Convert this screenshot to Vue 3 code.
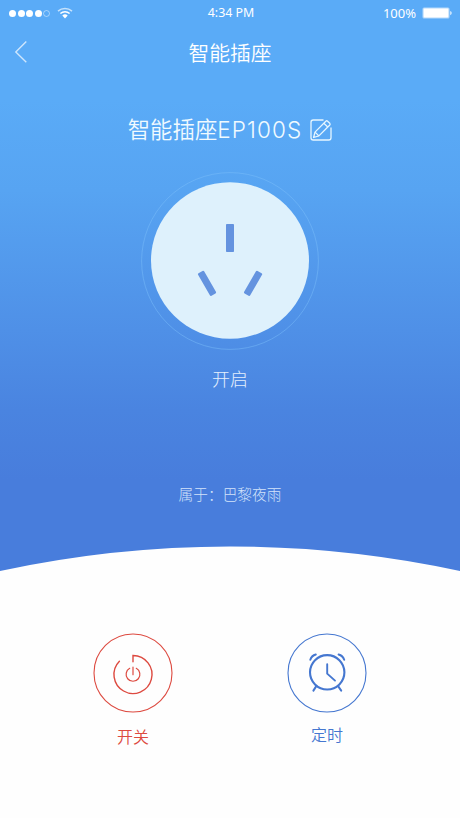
<template>
    <div class="page">
        <section class="hero">
            <header class="status-bar">
                <div class="signal">
                    <i v-for="n in 5" :key="n" class="dot" :class="{ empty: n > signalLevel }"></i>
                    <svg class="wifi" width="16" height="12" viewBox="0 0 16 12">
                        <path d="M1 4.1A10.6 10.6 0 0 1 15 4.1" opacity="0.65" />
                        <path d="M3.4 6.5A7 7 0 0 1 12.6 6.5" />
                        <path class="wifi-core" d="M5.3 8.6A4 4 0 0 1 10.7 8.6L8 11.4Z" />
                    </svg>
                </div>
                <span class="time">4:34 PM</span>
                <div class="battery">
                    <span>100%</span>
                    <svg width="31" height="12" viewBox="0 0 31 12">
                        <rect x="0.5" y="0.5" width="27" height="11" rx="1.5" fill="#fff" fill-opacity="0.55" />
                        <rect x="1.6" y="1.6" width="24.8" height="8.8" rx="0.8" fill="#fff" />
                        <path d="M28.2 4a2.2 2.2 0 0 1 0 4.2z" fill="#fff" fill-opacity="0.8" />
                    </svg>
                </div>
            </header>

            <nav class="nav-bar">
                <svg class="back" width="14" height="24" viewBox="0 0 14 24">
                    <path d="M12.3 1.5L1.8 12L12.3 22.3" />
                </svg>
                <h1>智能插座</h1>
            </nav>

            <div class="device-name">
                <span>智能插座</span><span class="model">EP100S</span>
                <svg class="edit" width="22" height="22" viewBox="0 0 22 22">
                    <path d="M13.5 1H3.2Q1 1 1 3.2V18.8Q1 21 3.2 21H18.8Q21 21 21 18.8V8.5" />
                    <path d="M3.6 18.5L5 13.1L15.8 2.2Q16.7 1.4 17.6 2.2L19.8 4.3Q20.5 5.2 19.8 6L8.9 16.9Z" />
                    <path d="M5 13.1L8.9 16.9M13.8 4.2L17.8 8" />
                </svg>
            </div>

            <svg class="socket" width="180" height="180" viewBox="0 0 180 180">
                <circle class="ring" cx="90" cy="90" r="88.4" />
                <ellipse class="plate" cx="90" cy="89.5" rx="79" ry="78.2" />
                <g class="holes">
                    <rect x="86" y="53" width="8" height="28" rx="0.8" />
                    <rect x="63.5" y="99.3" width="7" height="26" rx="1.2" transform="rotate(-30 67 112.3)" />
                    <rect x="109.6" y="99.3" width="7" height="26" rx="1.2" transform="rotate(30 113.1 112.3)" />
                </g>
            </svg>

            <p class="state">开启</p>
            <p class="owner">属于：巴黎夜雨</p>

            <svg class="arc" width="460" height="26" viewBox="0 0 460 26">
                <path d="M0 25A1092 1092 0 0 1 460 25V26H0Z" />
            </svg>
        </section>

        <section class="actions">
            <button class="action power">
                <svg width="80" height="80" viewBox="0 0 80 80">
                    <circle cx="40" cy="40" r="39" stroke-width="1.1" />
                    <path d="M40 28.8V22.5A19 19 0 1 1 26.4 28.2" stroke-width="1.4" />
                    <path d="M36.7 35.3A6.9 6.9 0 1 0 43.3 35.3M40 34V41.7" stroke-width="1.2" />
                </svg>
                <span>开关</span>
            </button>
            <button class="action timer">
                <svg width="80" height="80" viewBox="0 0 80 80">
                    <circle cx="40" cy="40" r="39" stroke-width="1.1" />
                    <circle cx="40.2" cy="39.3" r="17.2" stroke-width="2.1" />
                    <path d="M40.2 31.3V40.6L48 47.6" stroke-width="1.9" />
                    <path d="M23.3 26.8Q24.6 22.6 28.8 21.5M51.6 21.5Q55.8 22.6 57.2 26.8" stroke-width="2" />
                    <path d="M29.3 53.1L26.4 57.6M51.1 53.1L54.2 57.6" stroke-width="2" />
                </svg>
                <span>定时</span>
            </button>
        </section>
    </div>
</template>

<script setup>
import { ref } from "vue";

const signalLevel = ref(4);
</script>

<style>
body {
    margin: 0;
    background: #fefefe;
}
</style>

<style scoped>
.page {
    width: 460px;
    height: 818px;
    overflow: hidden;
    background: #fefefe;
    font-family: "Noto Sans CJK SC", sans-serif;
    font-weight: 300;
}

svg {
    display: block;
    fill: none;
}

.hero {
    height: 572px;
    display: flex;
    flex-direction: column;
    align-items: center;
    color: #fff;
    background: linear-gradient(#5aabf7 0, #5aabf7 100px, #57a4f2 190px, #4f90e7 330px, #4a84e0 410px, #487ddc 480px, #487ddc 100%);
}

.status-bar {
    width: 100%;
    height: 26px;
    box-sizing: border-box;
    padding: 0 7px 0 9px;
    display: grid;
    grid-template-columns: 1fr auto 1fr;
    align-items: center;
    font-family: "Noto Sans", sans-serif;
    font-weight: 400;
    font-size: 12px;
    line-height: 26px;
}

.signal {
    display: flex;
    align-items: center;
    gap: 1.6px;
}

.dot {
    width: 7px;
    height: 7px;
    border-radius: 50%;
    background: #fff;
}

.dot.empty {
    box-sizing: border-box;
    border: 1px solid rgba(255, 255, 255, 0.45);
    background: none;
}

.wifi {
    margin-left: 5px;
    stroke: #fff;
    stroke-width: 1.5;
}

.wifi .wifi-core {
    fill: #fff;
    stroke: none;
}

.time {
    font-size: 12.4px;
}

.battery {
    display: flex;
    align-items: center;
    justify-content: flex-end;
    gap: 6px;
    font-size: 13px;
}

.nav-bar {
    width: 100%;
    height: 52px;
    box-sizing: border-box;
    padding: 0 14px;
    display: grid;
    grid-template-columns: 1fr auto 1fr;
    align-items: center;
}

.back {
    stroke: rgba(255, 255, 255, 0.7);
    stroke-width: 1.4;
}

h1 {
    margin: 0;
    font-size: 20.8px;
    font-weight: 350;
    line-height: 50px;
}

.device-name {
    height: 32px;
    margin-top: 36px;
    display: flex;
    align-items: center;
    font-size: 22.4px;
    line-height: 30px;
    color: #f0faff;
}

.device-name span:first-child {
    margin-top: -4px;
    font-weight: 350;
}

.model {
    font-family: Inter, sans-serif;
    font-size: 22.5px;
    letter-spacing: 1.1px;
}

.edit {
    margin-left: 8px;
    stroke: #e6f6ff;
    stroke-width: 1.3;
    stroke-linejoin: round;
}

.socket {
    margin-top: 25px;
}

.ring {
    stroke: #7fc0fa;
    stroke-opacity: 0.45;
    stroke-width: 1;
}

.plate {
    fill: #def1fc;
}

.holes {
    fill: #6493df;
}

.state {
    margin: 13px 0 0;
    font-size: 18px;
    line-height: 28px;
    color: #e4f0fd;
}

.owner {
    margin: 92px 0 0;
    font-size: 14.7px;
    line-height: 20px;
    color: #d3e3fa;
}

.arc {
    margin-top: auto;
    fill: #fefefe;
}

.actions {
    padding: 61px 93px 0;
    display: flex;
    justify-content: space-between;
}

.action {
    padding: 0;
    border: none;
    background: none;
    display: flex;
    flex-direction: column;
    align-items: center;
    gap: 11px;
    font-family: inherit;
    font-weight: 350;
    font-size: 16px;
    line-height: 24px;
}

.action svg {
    stroke: currentColor;
    stroke-linecap: round;
}

.power {
    color: #dd4a40;
}

.timer {
    color: #4577d0;
}

.timer span {
    margin-top: -2px;
}
</style>
